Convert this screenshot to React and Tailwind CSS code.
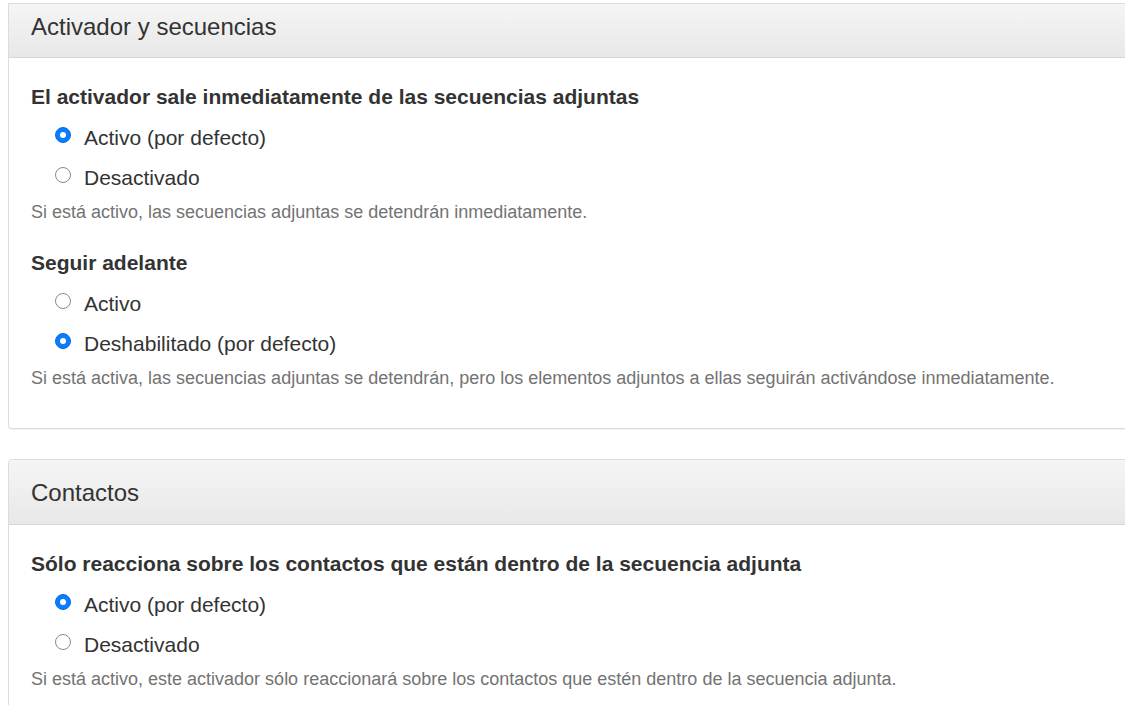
import React from 'react';

const sections = [
  {
    title: 'Activador y secuencias',
    headerClass: 'h-[54px] pb-[7px]',
    groups: [
      {
        label: 'El activador sale inmediatamente de las secuencias adjuntas',
        options: [
          { text: 'Activo (por defecto)', checked: true },
          { text: 'Desactivado', checked: false },
        ],
        help: 'Si está activo, las secuencias adjuntas se detendrán inmediatamente.',
      },
      {
        label: 'Seguir adelante',
        options: [
          { text: 'Activo', checked: false },
          { text: 'Deshabilitado (por defecto)', checked: true },
        ],
        help: 'Si está activa, las secuencias adjuntas se detendrán, pero los elementos adjuntos a ellas seguirán activándose inmediatamente.',
      },
    ],
  },
  {
    title: 'Contactos',
    headerClass: 'h-[65px] pt-[2px] rounded-t-[4px]',
    groups: [
      {
        label: 'Sólo reacciona sobre los contactos que están dentro de la secuencia adjunta',
        options: [
          { text: 'Activo (por defecto)', checked: true },
          { text: 'Desactivado', checked: false },
        ],
        help: 'Si está activo, este activador sólo reaccionará sobre los contactos que estén dentro de la secuencia adjunta.',
      },
    ],
  },
];

function Radio({ checked }) {
  if (checked) {
    return (
      <span className="w-4 h-4 rounded-full bg-[#0b7bff] border border-[#0a6de0] flex items-center justify-center shrink-0 -mt-[5px]">
        <span className="w-[6px] h-[6px] rounded-full bg-white" />
      </span>
    );
  }
  return <span className="w-4 h-4 rounded-full bg-white border border-[#8a8a8a] shrink-0 -mt-[5px]" />;
}

function Group({ group, last }) {
  return (
    <div className={last ? 'pb-[35px]' : 'pb-[16px]'}>
      <div className="h-[40px] flex items-center text-[21px] font-bold text-[#333]">{group.label}</div>
      {group.options.map((o) => (
        <div key={o.text} className="h-[40px] flex items-center pl-[24px] gap-[13px]">
          <Radio checked={o.checked} />
          <span className="text-[21px] text-[#333] leading-none">{o.text}</span>
        </div>
      ))}
      <div className="h-[30px] flex items-center text-[18px] text-[#737373]">{group.help}</div>
    </div>
  );
}

export default function App() {
  return (
    <div className="w-[1125px] h-[705px] overflow-hidden bg-white font-['Liberation_Sans',Arial,sans-serif] pt-[3px] pl-[8px]">
      {sections.map((s, i) => (
        <div
          key={s.title}
          className={`w-[1140px] border border-[#dcdcdc] rounded-[4px] bg-white shadow-[0_1px_1px_rgba(0,0,0,0.05)] ${i === 0 ? 'mb-[30px] rounded-t-none' : ''}`}
        >
          <div className={`${s.headerClass} flex items-center px-[22px] border-b border-[#d6d6d6] bg-gradient-to-b from-[#f5f5f5] to-[#e8e8e8]`}>
            <span className="text-[24px] text-[#333]">{s.title}</span>
          </div>
          <div className="px-[22px] pt-[19px]">
            {s.groups.map((g, j) => (
              <Group key={g.label} group={g} last={j === s.groups.length - 1} />
            ))}
          </div>
        </div>
      ))}
    </div>
  );
}
